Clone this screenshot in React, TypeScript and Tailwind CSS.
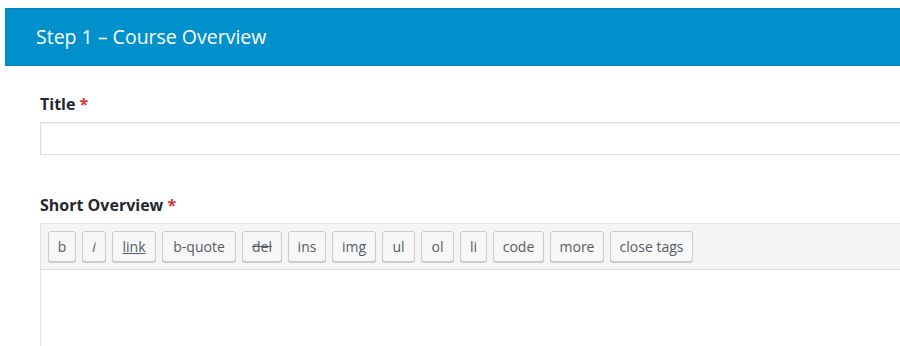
const buttons = [
  { label: "b", w: "w-[28px]" },
  { label: "i", w: "w-[24px]", cls: "italic" },
  { label: "link", w: "w-[44px]", cls: "underline" },
  { label: "b-quote", w: "w-[74px]" },
  { label: "del", w: "w-[40px]", cls: "line-through" },
  { label: "ins", w: "w-[38px]" },
  { label: "img", w: "w-[44px]" },
  { label: "ul", w: "w-[33px]" },
  { label: "ol", w: "w-[33px]" },
  { label: "li", w: "w-[27px]" },
  { label: "code", w: "w-[51px]" },
  { label: "more", w: "w-[54px]" },
  { label: "close tags", w: "w-[83px]" },
];

export default function App() {
  return (
    <div className="h-[346px] w-[900px] overflow-hidden bg-white font-['Open_Sans',sans-serif] text-[#32373c]">
      <div className="pt-[8px] pl-[5px]">
        <div className="flex h-[58px] items-center border-y border-[#0a81b8] bg-[#0091cd] pl-[31px] text-[19.5px] text-white">
          Step 1 – Course Overview
        </div>
      </div>

      <div className="pl-[40px]">
        <h2 className="mt-[26px] text-[16px] font-bold leading-[24px] text-[#23282d]">
          Title <span className="text-[#dc3232]">*</span>
        </h2>
        <input className="mt-[6px] block h-[33px] w-[880px] border border-[#dddddd] bg-white shadow-[inset_0_1px_2px_rgba(0,0,0,0.07)] outline-none" />

        <h2 className="mt-[38px] text-[16px] font-bold leading-[24px] text-[#23282d]">
          Short Overview <span className="text-[#dc3232]">*</span>
        </h2>
        <div className="mt-[6px] w-[880px] border border-[#e5e5e5]">
          <div className="flex h-[46px] items-center gap-[6px] border-b border-[#dddddd] bg-[#f5f5f5] pl-[7px]">
            {buttons.map((b) => (
              <button
                key={b.label}
                className={`flex h-[31px] ${b.w} items-center justify-center rounded-[3px] border border-[#cccccc] bg-[#f7f7f7] text-[14px] text-[#555d66] shadow-[0_1px_0_#cccccc] ${b.cls ?? ""}`}
              >
                {b.label}
              </button>
            ))}
          </div>
          <div className="h-[100px] bg-white" />
        </div>
      </div>
    </div>
  );
}
